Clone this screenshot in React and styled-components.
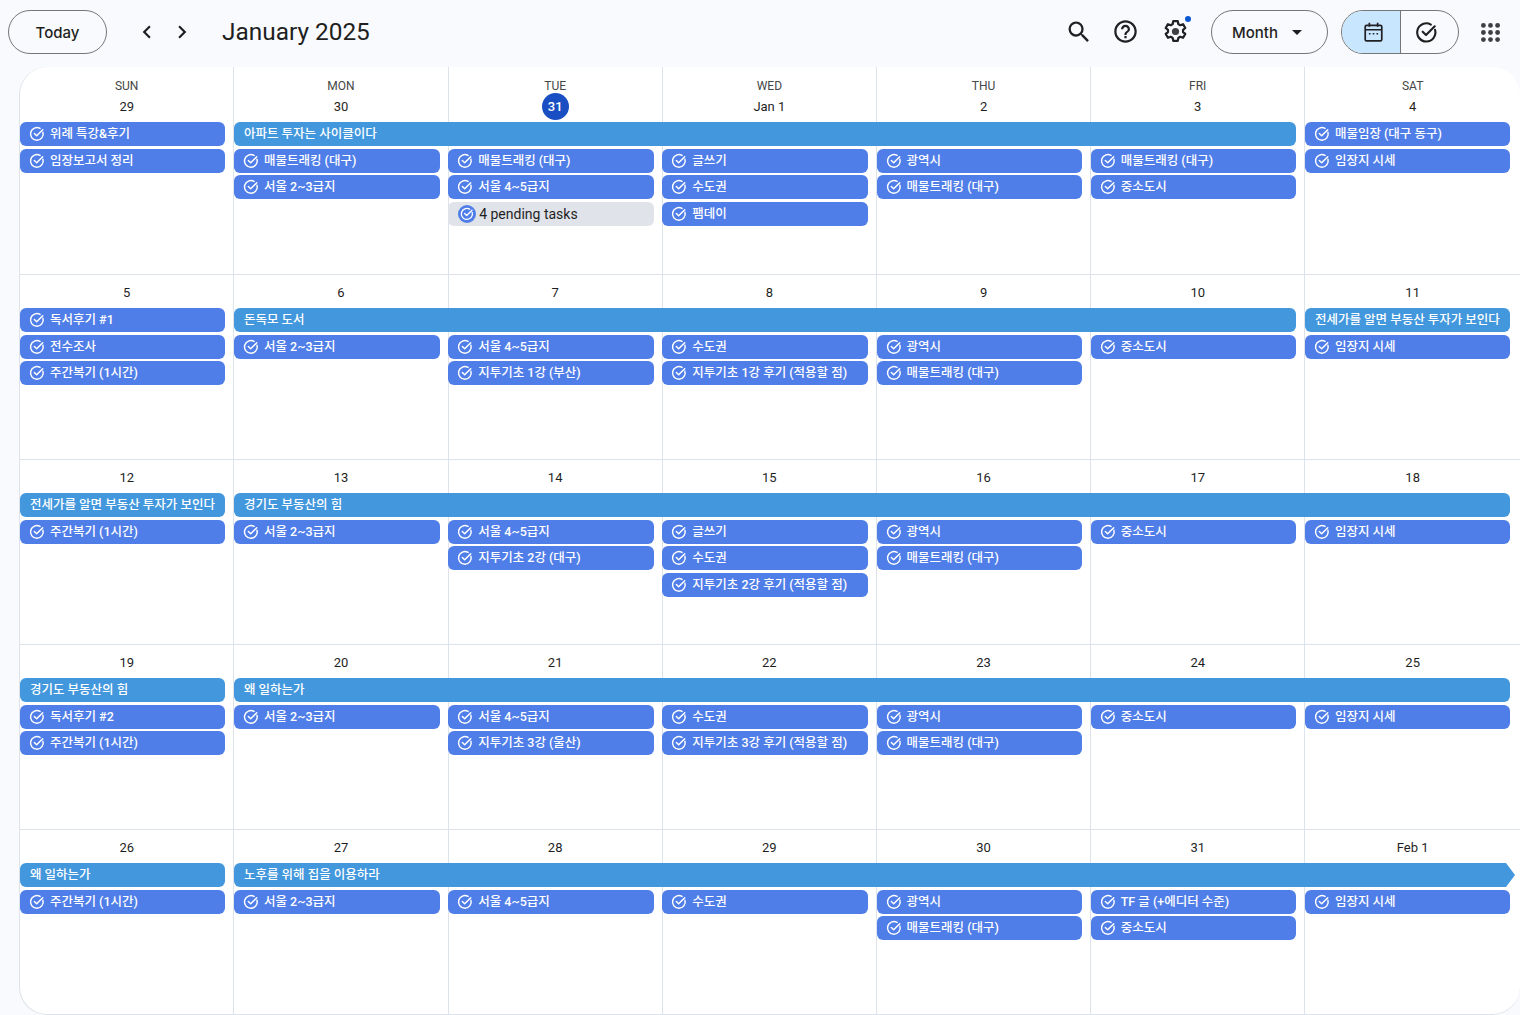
import React from 'react';
import styled, { createGlobalStyle } from 'styled-components';
import { MdSearch, MdChevronLeft, MdChevronRight, MdArrowDropDown, MdOutlineHelpOutline } from 'react-icons/md';

const SANS = `"Roboto", "Noto Sans CJK KR", sans-serif`;

const Global = createGlobalStyle`
  html, body { margin: 0; padding: 0; background: #f8fafd; }
  body { font-family: ${SANS}; overflow: hidden; }
`;

const weeks = [
  {
    days: ['29', '30', '31', 'Jan 1', '2', '3', '4'],
    events: [
      [[1, 1, '위례 특강&후기'], [2, 5, '아파트 투자는 사이클이다', 'span'], [7, 1, '매물임장 (대구 동구)']],
      [[1, 1, '임장보고서 정리'], [2, 1, '매물트래킹 (대구)'], [3, 1, '매물트래킹 (대구)'], [4, 1, '글쓰기'], [5, 1, '광역시'], [6, 1, '매물트래킹 (대구)'], [7, 1, '임장지 시세']],
      [[2, 1, '서울 2~3급지'], [3, 1, '서울 4~5급지'], [4, 1, '수도권'], [5, 1, '매물트래킹 (대구)'], [6, 1, '중소도시']],
      [[3, 1, '4 pending tasks', 'pending'], [4, 1, '팸데이']],
    ],
  },
  {
    days: ['5', '6', '7', '8', '9', '10', '11'],
    events: [
      [[1, 1, '독서후기 #1'], [2, 5, '돈독모 도서', 'span'], [7, 1, '전세가를 알면 부동산 투자가 보인다', 'span']],
      [[1, 1, '전수조사'], [2, 1, '서울 2~3급지'], [3, 1, '서울 4~5급지'], [4, 1, '수도권'], [5, 1, '광역시'], [6, 1, '중소도시'], [7, 1, '임장지 시세']],
      [[1, 1, '주간복기 (1시간)'], [3, 1, '지투기초 1강 (부산)'], [4, 1, '지투기초 1강 후기 (적용할 점)'], [5, 1, '매물트래킹 (대구)']],
    ],
  },
  {
    days: ['12', '13', '14', '15', '16', '17', '18'],
    events: [
      [[1, 1, '전세가를 알면 부동산 투자가 보인다', 'span'], [2, 6, '경기도 부동산의 힘', 'span']],
      [[1, 1, '주간복기 (1시간)'], [2, 1, '서울 2~3급지'], [3, 1, '서울 4~5급지'], [4, 1, '글쓰기'], [5, 1, '광역시'], [6, 1, '중소도시'], [7, 1, '임장지 시세']],
      [[3, 1, '지투기초 2강 (대구)'], [4, 1, '수도권'], [5, 1, '매물트래킹 (대구)']],
      [[4, 1, '지투기초 2강 후기 (적용할 점)']],
    ],
  },
  {
    days: ['19', '20', '21', '22', '23', '24', '25'],
    events: [
      [[1, 1, '경기도 부동산의 힘', 'span'], [2, 6, '왜 일하는가', 'span']],
      [[1, 1, '독서후기 #2'], [2, 1, '서울 2~3급지'], [3, 1, '서울 4~5급지'], [4, 1, '수도권'], [5, 1, '광역시'], [6, 1, '중소도시'], [7, 1, '임장지 시세']],
      [[1, 1, '주간복기 (1시간)'], [3, 1, '지투기초 3강 (울산)'], [4, 1, '지투기초 3강 후기 (적용할 점)'], [5, 1, '매물트래킹 (대구)']],
    ],
  },
  {
    days: ['26', '27', '28', '29', '30', '31', 'Feb 1'],
    events: [
      [[1, 1, '왜 일하는가', 'span'], [2, 6, '노후를 위해 집을 이용하라', 'arrow']],
      [[1, 1, '주간복기 (1시간)'], [2, 1, '서울 2~3급지'], [3, 1, '서울 4~5급지'], [4, 1, '수도권'], [5, 1, '광역시'], [6, 1, 'TF 글 (+에디터 수준)'], [7, 1, '임장지 시세']],
      [[5, 1, '매물트래킹 (대구)'], [6, 1, '중소도시']],
    ],
  },
];

const dayNames = ['SUN', 'MON', 'TUE', 'WED', 'THU', 'FRI', 'SAT'];

export default function App() {
  return (
    <Page>
      <Global />
      <Toolbar>
        <TodayButton>Today</TodayButton>
        <Arrows>
          <MdChevronLeft size={26} />
          <MdChevronRight size={26} />
        </Arrows>
        <Title>January 2025</Title>
        <Spacer />
        <IconRow>
          <MdSearch size={28} />
          <MdOutlineHelpOutline size={27} />
          <SettingsIcon />
        </IconRow>
        <ViewButton>
          Month
          <MdArrowDropDown size={24} />
        </ViewButton>
        <Toggle>
          <ToggleSide $active><CalendarIcon /></ToggleSide>
          <ToggleSide><TaskIcon size={23} /></ToggleSide>
        </Toggle>
        <AppsIcon />
      </Toolbar>
      <Calendar>
        {weeks.map((week, w) => (
          <Week key={w} $first={w === 0}>
            {week.days.map((day, d) => (
              <DayCell key={d} $col={d + 1}>
                {w === 0 && <DayName>{dayNames[d]}</DayName>}
                <DayNumber $first={w === 0} $today={w === 0 && d === 2}>{day}</DayNumber>
              </DayCell>
            ))}
            {week.events.map((row, r) =>
              row.map(([col, span, label, kind]) => (
                <Event key={`${r}-${col}`} $row={r + 2} $col={col} $span={span} $kind={kind}>
                  {kind === 'pending' ? <PendingBadge><TaskIcon size={14} /></PendingBadge> : null}
                  {!kind ? <TaskIcon size={16} /> : null}
                  <EventLabel $kind={kind}>{label}</EventLabel>
                </Event>
              ))
            )}
          </Week>
        ))}
      </Calendar>
    </Page>
  );
}

function TaskIcon({ size }) {
  return (
    <svg width={size} height={size} viewBox="0 0 24 24" fill="none" stroke="currentColor" strokeWidth="2.2" strokeLinecap="round" strokeLinejoin="round" style={{ flexShrink: 0 }}>
      <path d="M20.9 9.2A9.5 9.5 0 1 1 16.6 3.7" />
      <path d="M8 11.2l3.5 3.5L20.6 5.6" />
    </svg>
  );
}

function SettingsIcon() {
  return (
    <SettingsWrap>
      <svg width="27" height="27" viewBox="0 0 24 24" fill="none" stroke="#202124" strokeWidth="2" strokeLinejoin="round">
        <path d="M10 2.8h4l.5 2.6 1.7 1 2.5-.9 2 3.4-2 1.7v1.9l2 1.7-2 3.4-2.5-.9-1.7 1-.5 2.6h-4l-.5-2.6-1.7-1-2.5.9-2-3.4 2-1.7v-1.9l-2-1.7 2-3.4 2.5.9 1.7-1z" />
        <circle cx="12" cy="12" r="3.2" fill="#3c4043" stroke="none" />
      </svg>
      <BlueDot />
    </SettingsWrap>
  );
}

function CalendarIcon() {
  return (
    <svg width="23" height="23" viewBox="0 0 20 20" fill="none" stroke="#202124" strokeWidth="1.5">
      <rect x="2.8" y="3.8" width="14.4" height="13.4" rx="1.2" />
      <path d="M2.8 7.6h14.4" />
      <path d="M6.4 1.6v3.4M13.6 1.6v3.4" />
      <path d="M6 11h1.4M9.3 11h1.4M12.6 11h1.4" strokeWidth="1.3" />
    </svg>
  );
}

function AppsIcon() {
  const dots = [];
  for (let y = 0; y < 3; y++) {
    for (let x = 0; x < 3; x++) {
      dots.push(<circle key={`${x}${y}`} cx={2.4 + x * 7.1} cy={2.4 + y * 7.1} r="2.4" />);
    }
  }
  return (
    <AppsSvg width="19" height="19" viewBox="0 0 19 19" fill="#3c4043">
      {dots}
    </AppsSvg>
  );
}

const Page = styled.div`
  width: 1520px;
  height: 1015px;
  overflow: hidden;
  background: #f8fafd;
  display: flex;
  flex-direction: column;
`;

const Toolbar = styled.div`
  height: 67px;
  flex-shrink: 0;
  display: flex;
  align-items: center;
  padding: 0 20px 3px 8px;
  box-sizing: border-box;
  color: #1f1f1f;
`;

const TodayButton = styled.div`
  width: 99px;
  height: 44px;
  box-sizing: border-box;
  border: 1px solid #747775;
  border-radius: 22px;
  display: flex;
  align-items: center;
  justify-content: center;
  font-family: "Inter", sans-serif;
  font-size: 15px;
  font-weight: 500;
`;

const Arrows = styled.div`
  display: flex;
  align-items: center;
  gap: 9px;
  margin-left: 27px;
`;

const Title = styled.div`
  font-size: 24.4px;
  font-weight: 400;
  margin: -2px 0 0 27px;
`;

const Spacer = styled.div`
  flex: 1;
`;

const IconRow = styled.div`
  display: flex;
  align-items: center;
  gap: 19.5px;
  color: #202124;
  margin-top: -1px;
`;

const SettingsWrap = styled.div`
  position: relative;
  display: flex;
  margin-left: 3.5px;
`;

const BlueDot = styled.span`
  position: absolute;
  top: -2px;
  right: -2px;
  width: 6px;
  height: 6px;
  border-radius: 50%;
  background: #0b57d0;
`;

const ViewButton = styled.div`
  width: 117px;
  height: 44px;
  box-sizing: border-box;
  margin-left: 22px;
  border: 1px solid #747775;
  border-radius: 22px;
  display: flex;
  align-items: center;
  justify-content: space-between;
  padding: 0 18px 0 20px;
  font-family: "Inter", sans-serif;
  font-size: 15px;
  font-weight: 500;
`;

const Toggle = styled.div`
  width: 118px;
  height: 44px;
  box-sizing: border-box;
  margin-left: 13px;
  border: 1px solid #747775;
  border-radius: 22px;
  overflow: hidden;
  display: flex;
`;

const ToggleSide = styled.div`
  flex: 1;
  display: flex;
  align-items: center;
  justify-content: center;
  background: ${(p) => (p.$active ? '#c9e6ff' : 'transparent')};
  padding: ${(p) => (p.$active ? '0 0 0 5px' : '0 5px 0 0')};
  & + & {
    border-left: 1px solid #747775;
  }
`;

const AppsSvg = styled.svg`
  margin-left: 22px;
`;

const Calendar = styled.div`
  margin-left: 19px;
  flex: 1;
  background: #fff;
  border-radius: 28px;
  border-left: 1px solid #dde3ea;
  border-bottom: 1px solid #dde3ea;
  box-sizing: border-box;
  overflow: hidden;
`;

const Week = styled.div`
  display: grid;
  grid-template-columns: 213.4px repeat(5, 214.2px) 1fr;
  grid-template-rows: ${(p) => (p.$first ? '55px' : '33px')} repeat(4, 26.67px) 1fr;
  height: ${(p) => (p.$first ? '208px' : '185px')};
  box-sizing: border-box;
  border-bottom: 1px solid #dde3ea;
  &:last-child {
    border-bottom: none;
  }
`;

const DayCell = styled.div`
  grid-column: ${(p) => p.$col};
  grid-row: 1 / -1;
  border-left: ${(p) => (p.$col === 1 ? 'none' : '1px solid #dde3ea')};
  display: flex;
  flex-direction: column;
  align-items: center;
  color: #1f1f1f;
`;

const DayName = styled.div`
  font-size: 12px;
  font-weight: 400;
  line-height: 16px;
  margin-top: 11px;
  color: #444746;
`;

const DayNumber = styled.div`
  font-size: 13px;
  font-weight: ${(p) => (p.$today ? 500 : 450)};
  min-width: 27px;
  height: 27px;
  display: flex;
  align-items: center;
  justify-content: center;
  margin-top: ${(p) => (p.$first ? '-1px' : '3.5px')};
  border-radius: 50%;
  ${(p) => p.$today && 'background: #1a4fc4; color: #fff;'}
`;

const eventColor = (kind) => {
  if (kind === 'pending') return '#e0e3e9';
  if (kind === 'span' || kind === 'arrow') return '#4297dd';
  return '#507ee8';
};

const Event = styled.div`
  grid-row: ${(p) => p.$row};
  grid-column: ${(p) => p.$col} / span ${(p) => p.$span};
  align-self: start;
  height: 24px;
  margin-right: ${(p) => {
    if (p.$kind === 'arrow') return '5px';
    return p.$col + p.$span === 8 ? '10px' : '8px';
  }};
  margin-left: ${(p) => (p.$col === 1 ? '0' : '0.6px')};
  background: ${(p) => eventColor(p.$kind)};
  color: ${(p) => (p.$kind === 'pending' ? '#1f1f1f' : '#fff')};
  border-radius: ${(p) => (p.$kind === 'arrow' ? '6px 0 0 6px' : '6px')};
  ${(p) => p.$kind === 'arrow' && 'clip-path: polygon(0 0, calc(100% - 9px) 0, 100% 50%, calc(100% - 9px) 100%, 0 100%);'}
  display: flex;
  align-items: center;
  gap: ${(p) => (p.$kind === 'pending' ? '3px' : '5px')};
  padding-left: ${(p) => (p.$kind ? '10px' : '9px')};
  box-sizing: border-box;
  font-size: ${(p) => (p.$kind === 'pending' ? '14px' : '12.5px')};
  font-weight: ${(p) => (p.$kind === 'pending' ? 400 : 500)};
  white-space: nowrap;
  overflow: hidden;
`;

const EventLabel = styled.span`
  margin-bottom: ${(p) => (p.$kind === 'pending' ? '0' : '3px')};
`;

const PendingBadge = styled.span`
  width: 18px;
  height: 18px;
  border-radius: 50%;
  background: #507ee8;
  color: #fff;
  display: flex;
  align-items: center;
  justify-content: center;
  flex-shrink: 0;
`;
